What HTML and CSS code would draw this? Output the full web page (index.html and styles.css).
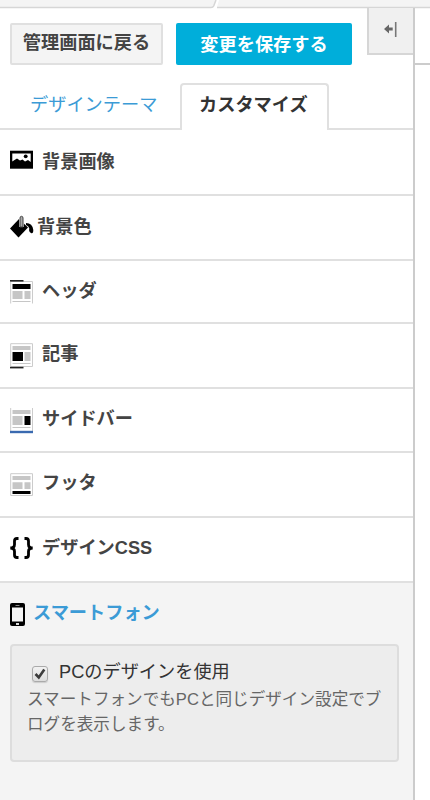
FILE: index.html
```html
<!DOCTYPE html>
<html lang="ja">
<head>
    <meta charset="UTF-8">
    <meta name="viewport" content="width=device-width, initial-scale=1.0">
    <title>デザイン</title>
    <link rel="stylesheet" href="styles.css">
</head>
<body>
    <div class="topbar">
        <svg width="430" height="9" viewBox="0 0 430 9">
            <path d="M0 0H216L213.500 6Q213 7.300 211 7.300H0Z" fill="#f4f4f4"/>
            <path d="M219 0H430V7.300H217Z" fill="#f4f4f4"/>
            <path d="M0 7.500H211Q213 7.500 213.700 6L216 0M217 7.500H430" fill="none" stroke="#d6d6d6" stroke-width="1.500"/>
        </svg>
    </div>
    <div class="main">
        <div class="sidebar">
            <div class="actions">
                <button class="btn btn-back">管理画面に戻る</button>
                <button class="btn btn-save">変更を保存する</button>
                <div class="collapse">
                    <svg width="14" height="17" viewBox="0 0 14 17">
                        <path d="M11.700 1V16" stroke="#777" stroke-width="1.600"/>
                        <path d="M0 8L5 3.500V6.500H8.700V9.500H5V12.500Z" fill="#666"/>
                    </svg>
                </div>
            </div>
            <div class="tabs">
                <a class="tab">デザインテーマ</a>
                <a class="tab active">カスタマイズ</a>
            </div>
            <div class="menu">
                <div class="item bg-image">
                    <svg width="24" height="24" viewBox="0 0 24 24">
                        <path d="M0 2.700H23V20.700H0Z" fill="#000"/>
                        <path d="M2.300 5.500H20.700V14L18 12L15 13.500L12.500 11.500L10 12.500L7 10.500L4.500 12L2.300 13.500Z" fill="#fff"/>
                        <circle cx="15.700" cy="8.300" r="1.900" fill="#000"/>
                    </svg>
                    <span>背景画像</span>
                </div>
                <div class="item bg-color">
                    <svg width="24" height="24" viewBox="0 0 24 24">
                        <path d="M0 13.500L9 4L18 12.500L8.500 22.500Z" fill="#000"/>
                        <path d="M11.500 1.500V12" stroke="#fff" stroke-width="4.800"/>
                        <path d="M10 12V3Q10 1.300 11.500 1.300T13 3V12Z" fill="#aaa" stroke="#444" stroke-width="1"/>
                        <path d="M16 8Q22.500 8 23.300 15Q23.300 19 21 18Q18.500 16.500 19.300 13.500Q18.500 10.500 16 10Z" fill="#000"/>
                    </svg>
                    <span>背景色</span>
                </div>
                <div class="item header">
                    <svg width="24" height="24" viewBox="0 0 24 24">
                        <path d="M.700 23.500V1.500H22.500V23.500" fill="#fff" stroke="#ccc"/>
                        <path d="M0 .800H13.500" stroke="#222" stroke-width="1.600"/>
                        <path d="M2.500 4H20.500V9H2.500Z" fill="#000"/>
                        <path d="M2.500 11H12.500V19H2.500ZM14.500 11H20.500V19H14.500ZM2.500 21H20.500V22H2.500Z" fill="#c6c6c6"/>
                    </svg>
                    <span>ヘッダ</span>
                </div>
                <div class="item article">
                    <svg width="24" height="26" viewBox="0 0 24 26">
                        <path d="M.700 .700H22.500V23.500H.700Z" fill="#fff" stroke="#ccc"/>
                        <path d="M2.500 3H20.500V7H2.500ZM14.500 9H20.500V18H14.500ZM2.500 20H20.500V21H2.500Z" fill="#c6c6c6"/>
                        <path d="M2.500 9H13V18H2.500Z" fill="#000"/>
                        <path d="M0 24.600H13.500" stroke="#222" stroke-width="1.600"/>
                    </svg>
                    <span>記事</span>
                </div>
                <div class="item side">
                    <svg width="24" height="26" viewBox="0 0 24 26">
                        <path d="M.700 0V23M22.500 0V23" fill="none" stroke="#ccc"/>
                        <path d="M2.500 2H20.500V6H2.500ZM2.500 8H12.500V17H2.500ZM2.500 19H20.500V20H2.500Z" fill="#c6c6c6"/>
                        <path d="M14.500 8H20.500V17H14.500Z" fill="#000"/>
                        <path d="M0 24H23" stroke="#3a6ab0" stroke-width="2.400"/>
                    </svg>
                    <span>サイドバー</span>
                </div>
                <div class="item footer">
                    <svg width="24" height="24" viewBox="0 0 24 24">
                        <path d="M.700 .700H22.500V22.500H.700Z" fill="#fff" stroke="#ccc"/>
                        <path d="M2.500 3H20.500V7H2.500ZM2.500 9.300H12.500V16H2.500ZM14.500 9.300H20.500V16H14.500Z" fill="#c6c6c6"/>
                        <path d="M2.500 18H20.500V21H2.500Z" fill="#000"/>
                    </svg>
                    <span>フッタ</span>
                </div>
                <div class="item css">
                    <svg width="24" height="24" viewBox="0 0 24 24">
                        <path d="M8.500 2.500H7Q4.500 2.500 4.500 5V8.500Q4.500 12 .300 12Q4.500 12 4.500 15.500V19Q4.500 21.500 7 21.500H8.500M14.500 2.500H16Q18.500 2.500 18.500 5V8.500Q18.500 12 22.700 12Q18.500 12 18.500 15.500V19Q18.500 21.500 16 21.500H14.500" fill="none" stroke="#000" stroke-width="2.800"/>
                    </svg>
                    <span>デザインCSS</span>
                </div>
            </div>
            <div class="smartphone">
                <div class="item phone">
                    <svg width="15" height="24" viewBox="0 0 15 24">
                        <rect x="0" y="0" width="15" height="23" rx="2" fill="#000"/>
                        <path d="M2 4.500H13V18.500H2Z" fill="#f4f4f4"/>
                        <path d="M5.500 2.500H9.500" stroke="#888"/>
                        <rect x="6" y="20" width="3" height="2" fill="#ddd"/>
                    </svg>
                    <span>スマートフォン</span>
                </div>
                <div class="panel">
                    <label class="check">
                        <span class="box">
                            <svg width="12" height="12" viewBox="0 0 12 12"><path d="M1.500 6L4.800 9.500L10.300 1.500" fill="none" stroke="#3c3c3c" stroke-width="2.600"/></svg>
                        </span>
                        <span>PCのデザインを使用</span>
                    </label>
                    <p>スマートフォンでもPCと同じデザイン設定でブログを表示します。</p>
                </div>
            </div>
        </div>
        <div class="preview"></div>
    </div>
</body>
</html>
```
FILE: styles.css
```css
* {
    box-sizing: border-box;
}

body {
    margin: 0;
    height: 800px;
    overflow: hidden;
    display: flex;
    flex-direction: column;
    background: #fff;
    color: #444;
    font-family: "Liberation Sans", "Noto Sans CJK JP", sans-serif;
    font-size: 18.2px;
}

svg {
    display: block;
    flex: none;
}

.topbar {
    height: 8px;
}

.main {
    flex: 1;
    display: flex;
}

.sidebar {
    width: 415px;
    border-right: 2px solid #ccc;
    display: flex;
    flex-direction: column;
}

.actions {
    height: 75px;
    display: flex;
    align-items: flex-start;
}

.btn {
    height: 42px;
    margin: 15px 0 0;
    border-radius: 2px;
    font: inherit;
    font-weight: bold;
    line-height: 34px;
    white-space: nowrap;
}

.btn-back {
    width: 153px;
    margin-left: 10px;
    padding: 0 0 2px;
    border: 2px solid #e0e0e0;
    background: #f4f4f4;
    color: #444;
}

.btn-save {
    width: 176px;
    margin-left: 13px;
    padding: 2px 0 0;
    border: none;
    background: #00aeda;
    color: #fff;
}

.collapse {
    width: 46px;
    height: 47px;
    margin-left: auto;
    padding: 13px 0 0 15px;
    background: #f0f0f0;
    border: solid #d6d6d6;
    border-width: 0 0 2px 2px;
}

.tabs {
    height: 47px;
    display: flex;
    border-bottom: 2px solid #e0e0e0;
}

.tab {
    width: 180px;
    padding-left: 30px;
    color: #3b9bd6;
    line-height: 45px;
    white-space: nowrap;
}

.tab.active {
    width: 149px;
    height: 47px;
    padding-left: 17px;
    background: #fff;
    border: 2px solid #e0e0e0;
    border-bottom: none;
    border-radius: 4px 4px 0 0;
    color: #333;
    font-weight: bold;
    line-height: 41px;
}

.item {
    height: 65px;
    padding: 18px 0 0 10px;
    display: flex;
    gap: 8px;
    border-bottom: 2px solid #e0e0e0;
    font-weight: bold;
    line-height: 26px;
}

.bg-image {
    height: 66px;
}

.bg-image span {
    margin-top: 1px;
}

.bg-color {
    gap: 3px;
}

.bg-color svg,
.css svg {
    margin-top: 1px;
}

.header {
    height: 63px;
    padding-top: 17px;
}

.header svg {
    margin-top: 2px;
}

.article {
    padding-top: 17px;
}

.article svg {
    margin-top: 2px;
}

.side {
    height: 64px;
    padding-top: 17px;
}

.side svg {
    margin-top: 2px;
}

.footer {
    padding-top: 17px;
}

.footer svg {
    margin-top: 3px;
}

.css {
    padding-top: 17px;
}

.smartphone {
    flex: 1;
    background: #f4f4f4;
}

.phone {
    height: 61px;
    padding-top: 17px;
    border: none;
    color: #3b9bd6;
}

.phone svg {
    margin-top: 3px;
}

.panel {
    width: 389px;
    height: 118px;
    margin-left: 10px;
    padding: 13px 14px 0 15px;
    background: #ededed;
    border: 2px solid #ddd;
    border-radius: 4px;
}

.check {
    display: flex;
    color: #333;
    line-height: 26px;
}

.box {
    width: 16px;
    height: 16px;
    margin: 7px 11px 0 5px;
    padding: 1px;
    border: 1px solid #aaa;
    border-radius: 3px;
    background: linear-gradient(#f2f2f2, #ddd);
    box-shadow: 0 1px 1px #ccc;
}

.panel p {
    margin: 2px 0 0;
    color: #666;
    font-size: 16.6px;
    line-height: 25px;
}

.preview {
    flex: 1;
    height: 57px;
    border-bottom: 2px solid #ccc;
}
```
